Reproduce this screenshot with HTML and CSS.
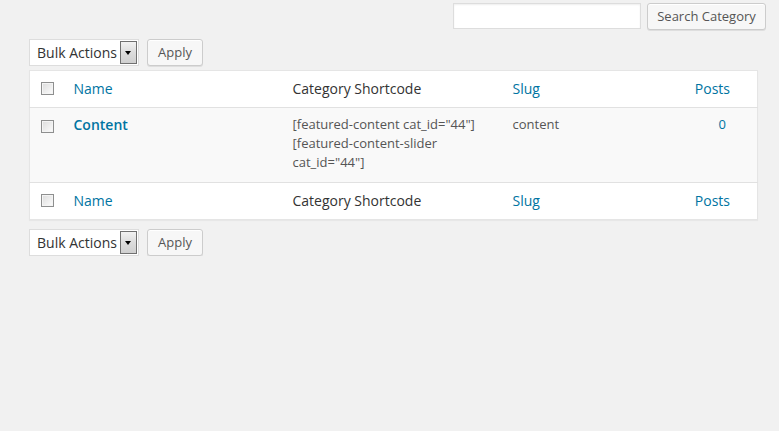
FILE: index.html
```html
<!DOCTYPE html>
<html>
<head>
<meta charset="utf-8">
<link rel="stylesheet" href="styles.css">
</head>
<body>
<div class="wrap">
  <div class="search-box">
    <input class="search-input" type="text">
    <button class="btn btn-search">Search Category</button>
  </div>
  <div class="main">
    <div class="tablenav tablenav-top">
      <div class="select"><span class="select-label">Bulk Actions</span><span class="select-arrow"></span></div>
      <button class="btn btn-apply">Apply</button>
    </div>
    <table class="list">
      <colgroup>
        <col class="c-cb"><col class="c-name"><col class="c-short"><col class="c-slug"><col class="c-posts">
      </colgroup>
      <thead>
        <tr>
          <th class="cb"><span class="checkbox"></span></th>
          <th><a class="link">Name</a></th>
          <th class="plain">Category Shortcode</th>
          <th><a class="link">Slug</a></th>
          <th class="posts"><a class="link">Posts</a></th>
        </tr>
      </thead>
      <tbody>
        <tr class="alt">
          <td class="cb"><span class="checkbox"></span></td>
          <td><a class="link strong">Content</a></td>
          <td class="code">[featured-content cat_id="44"]<br>[featured-content-slider cat_id="44"]</td>
          <td class="code">content</td>
          <td class="posts-count"><a class="link">0</a></td>
        </tr>
      </tbody>
      <tfoot>
        <tr>
          <th class="cb"><span class="checkbox"></span></th>
          <th><a class="link">Name</a></th>
          <th class="plain">Category Shortcode</th>
          <th><a class="link">Slug</a></th>
          <th class="posts"><a class="link">Posts</a></th>
        </tr>
      </tfoot>
    </table>
    <div class="tablenav tablenav-bottom">
      <div class="select"><span class="select-label">Bulk Actions</span><span class="select-arrow"></span></div>
      <button class="btn btn-apply">Apply</button>
    </div>
  </div>
</div>
</body>
</html>
```
FILE: styles.css
```css
html, body {
  margin: 0;
  padding: 0;
  background: #f1f1f1;
  font-family: "Open Sans", "Liberation Sans", sans-serif;
  color: #444;
}
.wrap {
  padding: 3px 13px 0 29px;
}
.search-box {
  display: flex;
  justify-content: flex-end;
  gap: 6px;
}
.search-input {
  box-sizing: border-box;
  width: 188px;
  height: 26px;
  margin: 0;
  border: 1px solid #ddd;
  background: #fff;
  box-shadow: inset 0 1px 2px rgba(0,0,0,.07);
  outline: none;
}
.btn {
  box-sizing: border-box;
  margin: 0;
  font-family: "Open Sans", "Liberation Sans", sans-serif;
  font-size: 13px;
  color: #555;
  background: #f7f7f7;
  border: 1px solid #ccc;
  border-radius: 3px;
  box-shadow: inset 0 1px 0 #fff, 0 1px 0 rgba(0,0,0,.08);
  padding: 0 10px;
  height: 27px;
  line-height: 25px;
  white-space: nowrap;
}
.btn-search {
  width: 119px;
  padding: 0;
}
.main {
  margin-right: 8px;
}
.tablenav {
  display: flex;
  align-items: center;
  gap: 8px;
  height: 27px;
}
.tablenav-top {
  margin-top: 9px;
  margin-bottom: 4px;
}
.tablenav-bottom {
  margin-top: 9px;
}
.select {
  box-sizing: border-box;
  width: 110px;
  height: 27px;
  background: #fff;
  border: 1px solid #ddd;
  display: flex;
  align-items: center;
  padding: 1px;
}
.select-label {
  flex: 1;
  font-size: 14px;
  color: #333;
  padding-left: 6px;
  line-height: 23px;
}
.select-arrow {
  box-sizing: border-box;
  width: 17px;
  height: 23px;
  border: 1px solid #707070;
  background: linear-gradient(#f2f2f2, #dcdcdc 50%, #cfcfcf);
  position: relative;
}
.select-arrow::after {
  content: "";
  position: absolute;
  left: 4px;
  top: 9px;
  border-left: 3.5px solid transparent;
  border-right: 3.5px solid transparent;
  border-top: 4px solid #000;
}
.btn-apply {
  width: 56px;
  padding: 0;
}
.list {
  width: 100%;
  border-collapse: collapse;
  background: #fff;
  border: 1px solid #e5e5e5;
  box-shadow: 0 1px 1px rgba(0,0,0,.04);
  table-layout: fixed;
}
.c-cb { width: 34px; }
.c-name { width: 219px; }
.c-short { width: 220px; }
.c-slug { width: auto; }
.c-posts { width: 90px; }
th, td {
  text-align: left;
  vertical-align: top;
  font-weight: normal;
}
thead th, tfoot th {
  font-size: 14px;
  line-height: 19px;
  padding: 8px 10px 9px;
}
thead tr { border-bottom: 1px solid #e1e1e1; }
tfoot tr { border-top: 1px solid #e1e1e1; }
th.plain { color: #333; }
.link {
  color: #0074a2;
  text-decoration: none;
}
.strong { font-weight: 600; font-size: 14px; }
.alt { background: #f9f9f9; }
td {
  font-size: 13px;
  line-height: 19px;
  padding: 7px 10px 10px;
  color: #555;
}
td.code { color: #555; }
.cb {
  padding: 0 0 0 11px !important;
}
.checkbox {
  display: block;
  box-sizing: border-box;
  width: 13px;
  height: 13px;
  margin-top: 11px;
  border: 1px solid #8e8f8f;
  background: linear-gradient(135deg, #dcdcdc, #fdfdfd);
  box-shadow: inset 0 0 0 1px #f4f4f4;
}
tbody .checkbox { margin-top: 12px; }
th.posts {
  text-align: right;
  padding-right: 27px;
}
td.posts-count {
  text-align: right;
  padding-right: 31px;
}
```
